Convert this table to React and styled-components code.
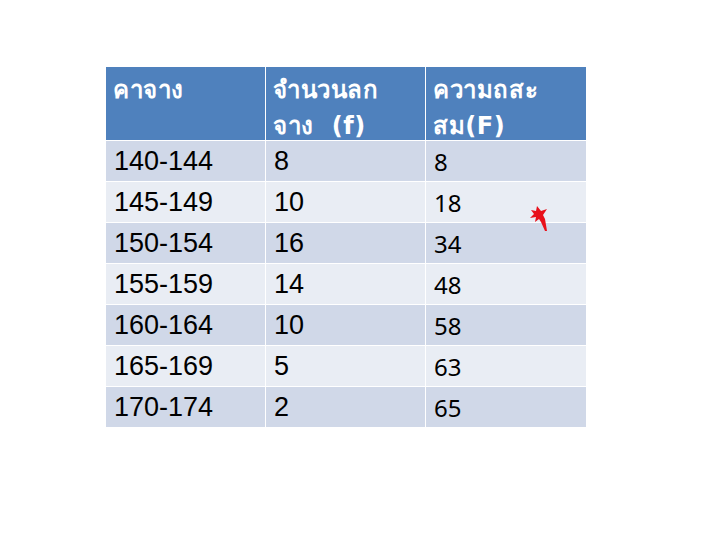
import styled, { createGlobalStyle } from 'styled-components';

const GlobalStyle = createGlobalStyle`
  html, body {
    margin: 0;
    padding: 0;
    background: #ffffff;
  }
  body {
    width: 720px;
    height: 540px;
    overflow: hidden;
    font-family: 'Liberation Sans', Arial, sans-serif;
  }
`;

const rows = [
  ['140-144', '8', '8'],
  ['145-149', '10', '18'],
  ['150-154', '16', '34'],
  ['155-159', '14', '48'],
  ['160-164', '10', '58'],
  ['165-169', '5', '63'],
  ['170-174', '2', '65'],
];

const App = () => {
  return (
    <>
      <GlobalStyle />
      <Page>
        <TableWrap>
          <Grid>
            <HeadCell>คาจาง</HeadCell>
            <HeadCell>จำนวนลก<br />จาง&nbsp; (f)</HeadCell>
            <HeadCell>ความถสะ<br />สม(F)</HeadCell>
            {rows.map((row, i) => (
              <Row key={row[0]}>
                <Cell $odd={i % 2 === 0}>{row[0]}</Cell>
                <Cell $odd={i % 2 === 0}>{row[1]}</Cell>
                <Cell $odd={i % 2 === 0} $small>{row[2]}</Cell>
              </Row>
            ))}
          </Grid>
          <Mark viewBox='0 0 18 26' aria-hidden='true'>
            <path
              d='M1 4 L6 5 L7 0 L11 5 L17 3 L13 9 L15 13 L17 25 L15 25 L11 16 L9 13 L5 16 L6 11 L0 12 L4 8 Z'
              fill='#e8101a'
            />
          </Mark>
        </TableWrap>
      </Page>
    </>
  );
};

export default App;

const Page = styled.div`
  padding: 67px 0 0 106px;
`;

const TableWrap = styled.div`
  position: relative;
  width: 480px;
`;

const Grid = styled.div`
  display: grid;
  grid-template-columns: 159px 159px 160px;
  grid-template-rows: 73px repeat(7, 40px);
  column-gap: 1px;
  row-gap: 1px;
  background: #ffffff;
`;

const Row = styled.div`
  display: contents;
`;

const HeadCell = styled.div`
  background: #4f81bd;
  color: #ffffff;
  font-family: Tahoma, 'DejaVu Sans', 'Noto Sans', sans-serif;
  font-weight: 700;
  font-size: 24px;
  line-height: 36px;
  padding: 5px 7px 0;
  letter-spacing: 0.6px;
`;

const Cell = styled.div`
  display: flex;
  align-items: center;
  padding: 0 8px;
  background: ${(p) => (p.$odd ? '#d0d8e8' : '#e9edf4')};
  color: #000000;
  font-family: ${(p) => (p.$small ? "'Noto Sans', 'Open Sans', sans-serif" : "'Liberation Sans', Arial, sans-serif")};
  font-size: ${(p) => (p.$small ? '24px' : '27px')};
`;

const Mark = styled.svg`
  position: absolute;
  left: 424px;
  top: 139px;
  width: 18px;
  height: 26px;
`;
